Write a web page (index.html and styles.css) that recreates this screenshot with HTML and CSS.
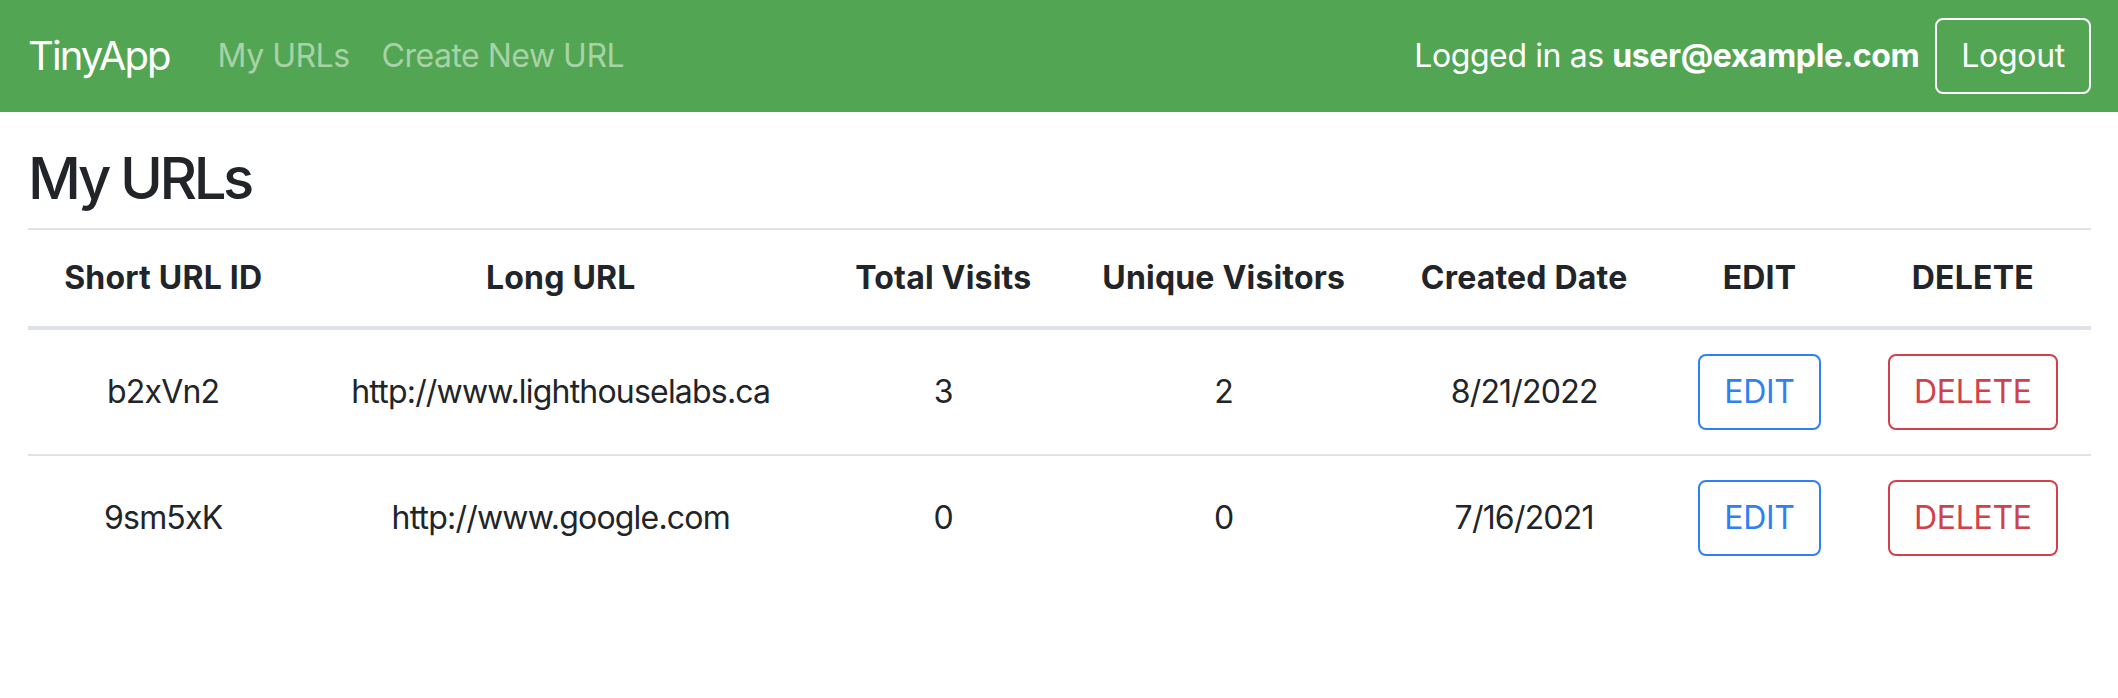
FILE: index.html
```html
<!DOCTYPE html>
<html lang="en">
<head>
<meta charset="utf-8">
<title>TinyApp</title>
<link rel="stylesheet" href="styles.css">
</head>
<body>
<nav class="navbar">
  <div class="nav-left">
    <a class="brand" href="#">TinyApp</a>
    <a class="nav-link" href="#">My URLs</a>
    <a class="nav-link" href="#">Create New URL</a>
  </div>
  <div class="nav-right">
    <span class="login-text">Logged in as <strong>user@example.com</strong></span>
    <button class="btn btn-light">Logout</button>
  </div>
</nav>
<main class="container">
  <h1 class="title">My URLs</h1>
  <table class="table">
    <colgroup>
      <col class="c1"><col class="c2"><col class="c3"><col class="c4"><col class="c5"><col class="c6"><col class="c7">
    </colgroup>
    <thead>
      <tr>
        <th>Short URL ID</th>
        <th>Long URL</th>
        <th>Total Visits</th>
        <th>Unique Visitors</th>
        <th>Created Date</th>
        <th>EDIT</th>
        <th>DELETE</th>
      </tr>
    </thead>
    <tbody>
      <tr>
        <td>b2xVn2</td>
        <td>http://www.lighthouselabs.ca</td>
        <td>3</td>
        <td>2</td>
        <td>8/21/2022</td>
        <td><button class="btn btn-blue">EDIT</button></td>
        <td><button class="btn btn-red">DELETE</button></td>
      </tr>
      <tr>
        <td>9sm5xK</td>
        <td>http://www.google.com</td>
        <td>0</td>
        <td>0</td>
        <td>7/16/2021</td>
        <td><button class="btn btn-blue">EDIT</button></td>
        <td><button class="btn btn-red">DELETE</button></td>
      </tr>
    </tbody>
  </table>
</main>
</body>
</html>
```
FILE: styles.css
```css
* { box-sizing: border-box; }
html, body { margin: 0; padding: 0; }
body {
  font-family: Inter, "Liberation Sans", sans-serif;
  font-size: 32px;
  line-height: 1.5;
  color: #212529;
  background: #fff;
}
.navbar {
  height: 112px;
  background: #52a552;
  display: flex;
  align-items: center;
  justify-content: space-between;
  padding: 16px 27px 16px 28px;
}
.nav-left, .nav-right {
  display: flex;
  align-items: center;
}
.brand {
  color: #fff;
  text-decoration: none;
  font-size: 40px;
  line-height: 60px;
  margin-right: 32px;
  letter-spacing: -1.9px;
}
.nav-link {
  color: rgba(255,255,255,0.5);
  text-decoration: none;
  padding: 0 16px;
  letter-spacing: -0.5px;
}
.login-text {
  color: #fff;
  margin-right: 16px;
  letter-spacing: -0.4px;
}
.login-text strong { font-weight: 700; }
.btn {
  font-family: inherit;
  font-size: 32px;
  line-height: 48px;
  padding: 12px 24px;
  border-radius: 8px;
  border: 2px solid;
  background: transparent;
  letter-spacing: -0.3px;
}
.btn-light { color: #fff; border-color: #fff; }
.btn-blue { color: #2f80f5; border-color: #2f80f5; }
.btn-red { color: #d0414a; border-color: #d0414a; }
.container {
  padding: 32px 27px 0 28px;
}
.title {
  margin: 0 0 14px;
  font-size: 58px;
  font-weight: 500;
  line-height: 1.2;
  letter-spacing: -3.4px;
}
.table {
  width: 100%;
  border-collapse: collapse;
  table-layout: fixed;
}
.c1 { width: 270px; }
.c2 { width: 524px; }
.c3 { width: 240px; }
.c4 { width: 320px; }
.c5 { width: 280px; }
.c6 { width: 190px; }
.c7 { width: 236px; }
.table th, .table td {
  padding: 24px;
  text-align: center;
  vertical-align: middle;
  border-top: 2px solid #dee2e6;
  white-space: nowrap;
  letter-spacing: -0.8px;
}
.table th { font-weight: 700; letter-spacing: 0.2px; }
.table thead th { border-bottom: 4px solid #dee2e6; }
```
